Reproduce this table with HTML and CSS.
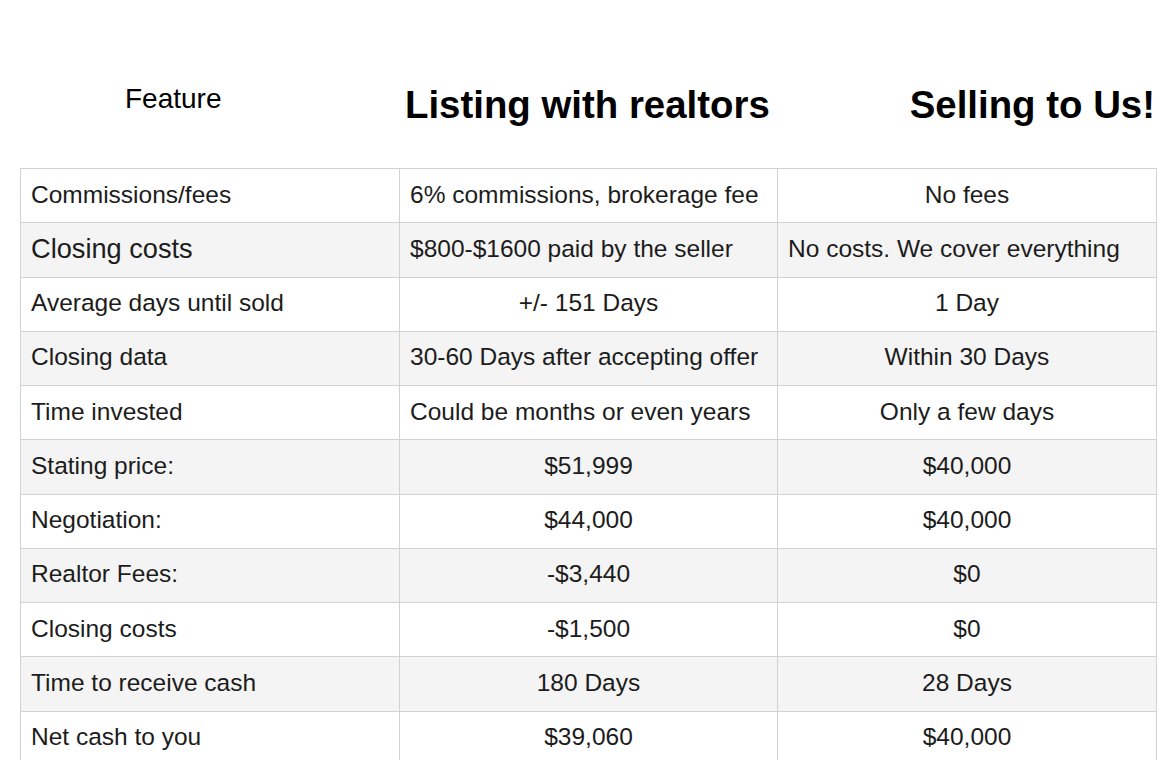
FILE: index.html
```html
<!DOCTYPE html>
<html lang="en">
<head>
<meta charset="utf-8">
<title>Listing with realtors vs Selling to Us</title>
<link rel="stylesheet" href="styles.css">
</head>
<body>
<div class="page">
  <header class="heads">
    <div class="head head-feature">Feature</div>
    <div class="head head-big head-listing">Listing with realtors</div>
    <div class="head head-big head-selling">Selling to Us!</div>
  </header>
  <table class="compare">
    <colgroup>
      <col class="c1"><col class="c2"><col class="c3">
    </colgroup>
    <tbody>
      <tr><td>Commissions/fees</td><td class="left">6% commissions, brokerage fee</td><td class="mid">No fees</td></tr>
      <tr><td class="large">Closing costs</td><td class="left">$800-$1600 paid by the seller</td><td class="left">No costs. We cover everything</td></tr>
      <tr><td>Average days until sold</td><td class="mid">+/- 151 Days</td><td class="mid">1 Day</td></tr>
      <tr><td>Closing data</td><td class="left">30-60 Days after accepting offer</td><td class="mid">Within 30 Days</td></tr>
      <tr><td>Time invested</td><td class="left">Could be months or even years</td><td class="mid">Only a few days</td></tr>
      <tr><td>Stating price:</td><td class="mid">$51,999</td><td class="mid">$40,000</td></tr>
      <tr><td>Negotiation:</td><td class="mid">$44,000</td><td class="mid">$40,000</td></tr>
      <tr><td>Realtor Fees:</td><td class="mid">-$3,440</td><td class="mid">$0</td></tr>
      <tr><td>Closing costs</td><td class="mid">-$1,500</td><td class="mid">$0</td></tr>
      <tr><td>Time to receive cash</td><td class="mid">180 Days</td><td class="mid">28 Days</td></tr>
      <tr><td>Net cash to you</td><td class="mid">$39,060</td><td class="mid">$40,000</td></tr>
    </tbody>
  </table>
</div>
</body>
</html>
```
FILE: styles.css
```css
html, body {
  margin: 0;
  padding: 0;
  background: #ffffff;
}
body {
  font-family: "Liberation Sans", Arial, Helvetica, sans-serif;
  color: #1c1c1c;
  overflow: hidden;
}
.page {
  width: 1170px;
  height: 760px;
  overflow: hidden;
}
.heads {
  display: grid;
  grid-template-columns: 379px 378px 379px;
  margin-left: 20px;
  padding-top: 83px;
  align-items: start;
}
.head {
  color: #000;
}
.head-feature {
  font-size: 28px;
  line-height: 32px;
  padding-left: 105px;
}
.head-big {
  font-size: 38.4px;
  line-height: 44px;
  font-weight: bold;
}
.head-listing {
  padding-left: 6px;
  white-space: nowrap;
}
.head-selling {
  text-align: right;
  padding-right: 1px;
  white-space: nowrap;
}
.compare {
  margin-top: 41px;
  margin-left: 20px;
  border-collapse: collapse;
  table-layout: fixed;
  width: 1137px;
}
.compare col.c1 { width: 379px; }
.compare col.c2 { width: 378px; }
.compare col.c3 { width: 379px; }
.compare tr {
  height: 54.27px;
}
.compare tr:nth-child(even) td {
  background: #f4f4f4;
}
.compare td {
  border: 1px solid #d2d2d2;
  font-size: 24.5px;
  line-height: 28px;
  padding: 0 9px 2px 10px;
  vertical-align: middle;
  text-align: left;
  white-space: nowrap;
}
.compare td.large {
  font-size: 27.2px;
}
.compare td.mid {
  text-align: center;
  padding-left: 9px;
  padding-right: 9px;
}
.compare td.left {
  text-align: left;
}
```
